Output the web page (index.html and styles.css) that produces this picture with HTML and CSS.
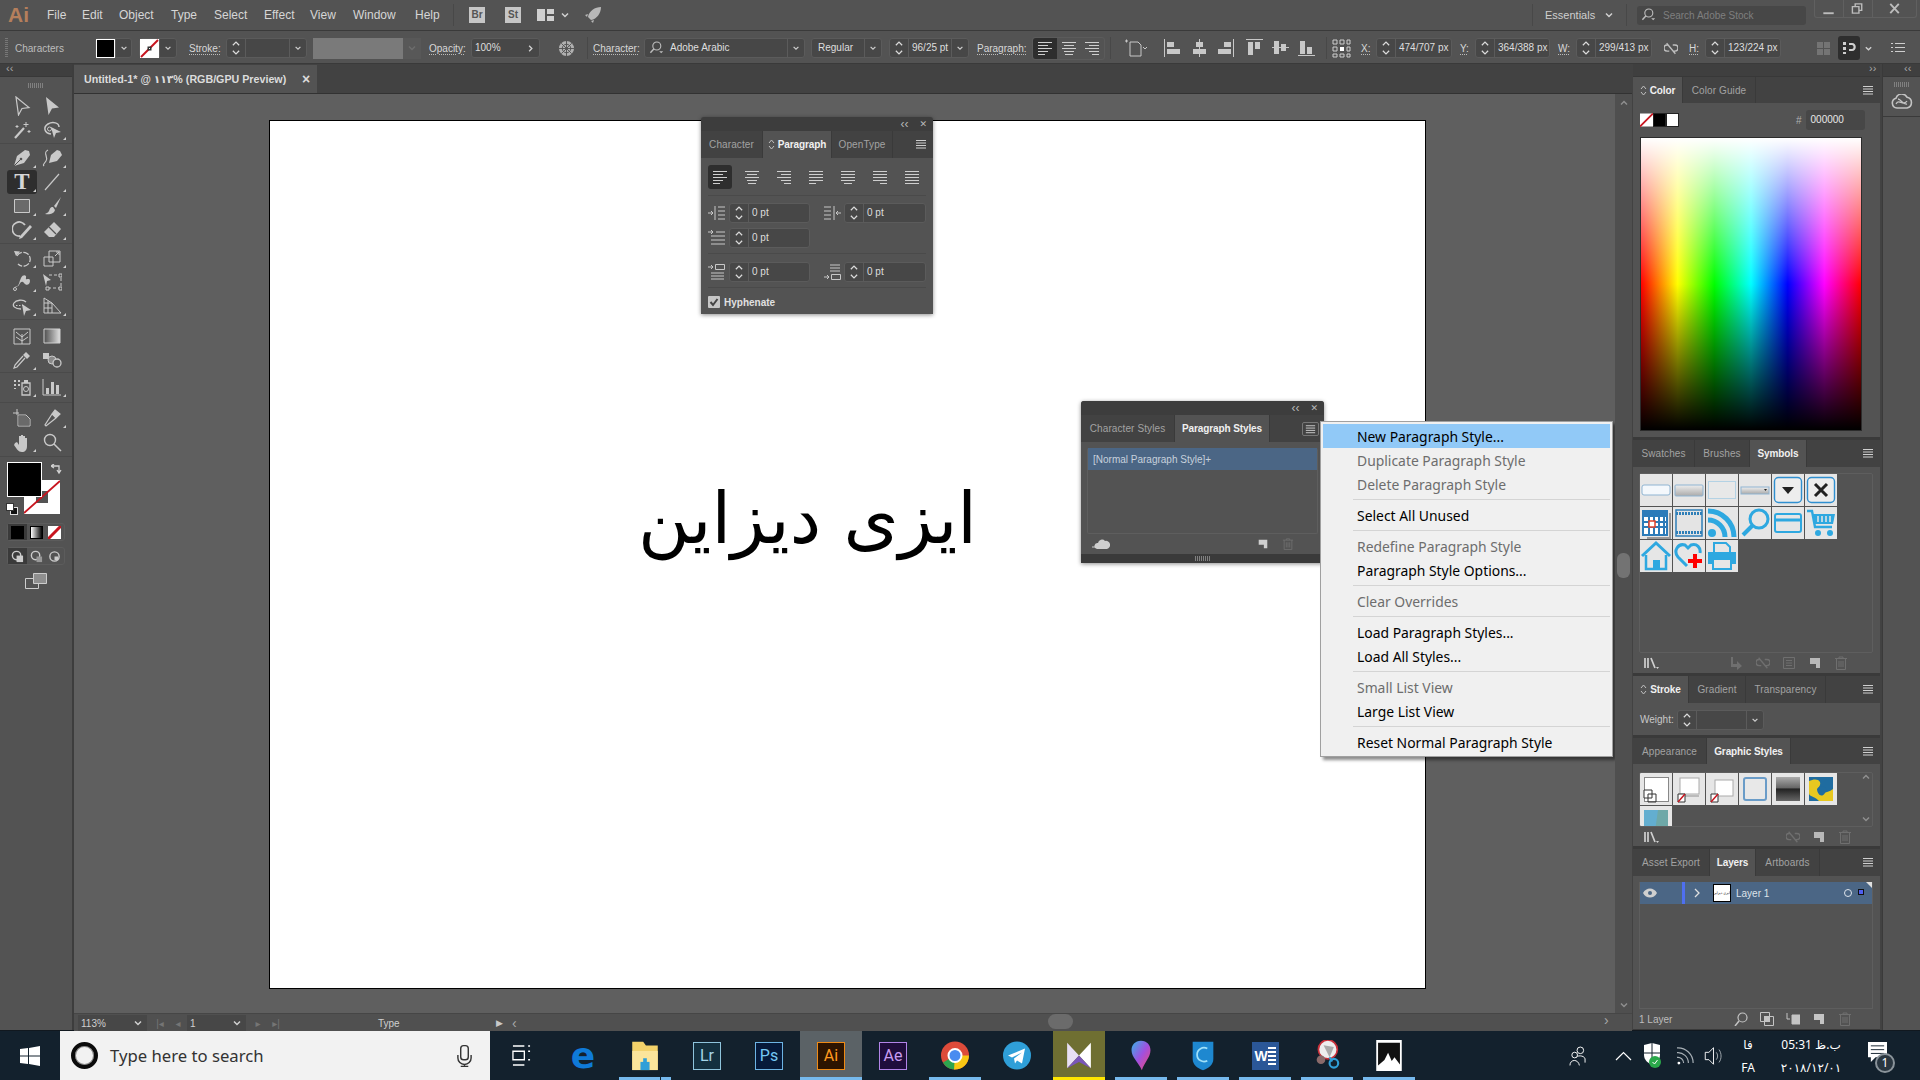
FILE: index.html
```html
<!DOCTYPE html>
<html lang="en">
<head>
  <meta charset="UTF-8" />
  <title>Adobe Illustrator</title>
  <link rel="stylesheet" href="styles.css">
</head>
<body>
  <!-- shared icons -->
  <svg class="defs" aria-hidden="true">
    <symbol id="chev" viewBox="0 0 10 10"><path d="M2 3.500l3 3 3-3" fill="none" stroke="currentColor" stroke-width="1.500"/></symbol>
    <symbol id="spin" viewBox="0 0 12 20"><path d="M2.500 7L6 3.500 9.500 7M2.500 13L6 16.500 9.500 13" fill="none" stroke="currentColor" stroke-width="1.400"/></symbol>
    <symbol id="updn" viewBox="0 0 7 11"><path d="M1 4l2.500-3L6 4M1 7l2.500 3L6 7" fill="none" stroke="currentColor"/></symbol>
    <symbol id="burger" viewBox="0 0 14 12"><path d="M2 2.500h10M2 5h10M2 7.500h10M2 10h10" stroke="currentColor" stroke-width="1"/></symbol>
    <symbol id="search" viewBox="0 0 20 20"><circle cx="11" cy="7.500" r="5" fill="none" stroke="currentColor" stroke-width="1.400"/><path d="M7.500 11L3 16" stroke="currentColor" stroke-width="1.800"/><path d="M14 14h5l-2.500 2.500z" fill="currentColor"/></symbol>
    <symbol id="al" viewBox="0 0 18 16"><path d="M2 2.500h14M2 5.500h10M2 8.500h14M2 11.500h10M2 14.500h7" stroke="currentColor"/></symbol>
    <symbol id="ac" viewBox="0 0 18 16"><path d="M2 2.500h14M4 5.500h10M2 8.500h14M4 11.500h10M5 14.500h8" stroke="currentColor"/></symbol>
    <symbol id="ar" viewBox="0 0 18 16"><path d="M2 2.500h14M6 5.500h10M2 8.500h14M6 11.500h10M9 14.500h7" stroke="currentColor"/></symbol>
    <symbol id="jl" viewBox="0 0 18 16"><path d="M2 2.500h14M2 5.500h14M2 8.500h14M2 11.500h14M2 14.500h7" stroke="currentColor"/></symbol>
    <symbol id="jc" viewBox="0 0 18 16"><path d="M2 2.500h14M2 5.500h14M2 8.500h14M2 11.500h14M5 14.500h8" stroke="currentColor"/></symbol>
    <symbol id="jr" viewBox="0 0 18 16"><path d="M2 2.500h14M2 5.500h14M2 8.500h14M2 11.500h14M9 14.500h7" stroke="currentColor"/></symbol>
    <symbol id="ja" viewBox="0 0 18 16"><path d="M2 2.500h14M2 5.500h14M2 8.500h14M2 11.500h14M2 14.500h14" stroke="currentColor"/></symbol>
    <symbol id="new" viewBox="0 0 14 14"><path d="M2 2h10v10H8V8H2z" fill="currentColor"/></symbol>
    <symbol id="trash" viewBox="0 0 14 14"><path d="M1 2.500h12M5 2.500V1h4v1.500M2.500 2.500v11h9v-11M5 5v6M7 5v6M9 5v6" fill="none" stroke="currentColor"/></symbol>
    <symbol id="unlink" viewBox="0 0 16 14"><path d="M5 3H3.500a3.500 3.500 0 0 0 0 7H6M10 3h2.500a3.500 3.500 0 0 1 0 7H10M3 1l10 12" fill="none" stroke="currentColor" stroke-width="1.500"/></symbol>
    <symbol id="lib" viewBox="0 0 16 14"><path d="M2 2v10M5 2v10M8 2l4 10" fill="none" stroke="currentColor" stroke-width="1.700"/><path d="M13 11h3l-1.500 2z" fill="currentColor"/></symbol>
    <symbol id="place" viewBox="0 0 14 14"><path d="M3 1v7h4V5l5 5-5 4v-3H1V1z" fill="currentColor"/></symbol>
    <symbol id="opts" viewBox="0 0 14 14"><path d="M1.500 1.500h11v11h-11zM4 4.500h6M4 7h6M4 9.500h6" fill="none" stroke="currentColor"/></symbol>
    <symbol id="doc" viewBox="0 0 24 20"><path d="M1 3h3M2.500 1.500v3M6 4h8l3 3v11H6zM19 9l2 2 2-2" fill="none" stroke="currentColor"/></symbol>
  </svg>

  <div class="app">
    <!-- Menu bar -->
    <header class="menubar">
      <span class="ai-logo">Ai</span>
      <nav class="menus">
        <span class="m-file">File</span><span class="m-edit">Edit</span><span class="m-object">Object</span><span class="m-type">Type</span><span class="m-select">Select</span><span class="m-effect">Effect</span><span class="m-view">View</span><span class="m-window">Window</span><span class="m-help">Help</span>
      </nav>
      <i class="vsep ml-1"></i>
      <span class="app-tile ml-15">Br</span>
      <span class="app-tile ml-20">St</span>
      <svg class="arrange-ic ml-16" viewBox="0 0 17 14"><path d="M0 1h8v12H0zM10 1h7v5h-7zM10 8h7v5h-7z" fill="currentColor"/></svg>
      <svg class="chev-ic ml-6"><use href="#chev"/></svg>
      <svg class="rocket-ic ml-14" viewBox="0 0 18 18"><path d="M17 1C11 1 5 5 4 11l3 3c6-1 10-7 10-13zM4 8L1 9l2 2zM10 14l-1 3-2-2z" fill="currentColor"/></svg>
      <div class="top-right">
        <i class="vsep"></i>
        <span class="workspace">Essentials</span>
        <svg class="chev-ic ws-chev"><use href="#chev"/></svg>
        <i class="vsep ml-12"></i>
        <div class="stock-search">
          <svg class="search-ic"><use href="#search"/></svg>
          <span>Search Adobe Stock</span>
        </div>
        <div class="win-btns">
          <svg viewBox="0 0 28 18" class="w-min"><path d="M8 13h11v2H8z" fill="currentColor"/></svg>
          <svg viewBox="0 0 30 18" class="w-res"><path d="M9 7h7v7H9zM12 7V4h7v7h-3" fill="none" stroke="currentColor" stroke-width="1.500"/></svg>
          <svg viewBox="0 0 44 18" class="w-cls"><path d="M17 4l9 10M26 4l-9 10" stroke="currentColor" stroke-width="2"/></svg>
        </div>
      </div>
    </header>

    <!-- Control bar -->
    <div class="controlbar">
      <i class="grip"></i>
      <span class="ctl-title">Characters</span>
      <div class="combo w-37 ml-7"><span class="sw sw-black"></span><svg class="chev-ic"><use href="#chev"/></svg></div>
      <div class="combo w-38 ml-7">
        <svg class="sw" viewBox="0 0 19 19"><path d="M0 0h19v19H0z" fill="#fff"/><path d="M1 18L18 1" stroke="#c8141e" stroke-width="2"/><path d="M7.500 7.500h4v4h-4z" fill="#333"/><path d="M9 9h1v1H9z" fill="#fff"/></svg>
        <svg class="chev-ic"><use href="#chev"/></svg>
      </div>
      <span class="ctl-label w-31 ml-12">Stroke:</span>
      <div class="combo w-81 ml-6"><svg class="spin-ic"><use href="#spin"/></svg><span class="val"></span><svg class="chev-ic"><use href="#chev"/></svg></div>
      <div class="gray-combo ml-6"><span class="gray-fill"></span><svg class="chev-ic"><use href="#chev"/></svg></div>
      <span class="ctl-label w-36 ml-8">Opacity:</span>
      <div class="combo w-69 ml-6"><span class="val">100%</span><svg class="chev-ic chev-right"><use href="#chev"/></svg></div>
      <svg class="globe-ic ml-18" viewBox="0 0 18 18"><circle cx="9" cy="9" r="8" fill="currentColor"/><path d="M9 1v16M1 9h16M3.500 3.500l11 11M14.500 3.500l-11 11" stroke="#535353"/><circle cx="9" cy="9" r="4.500" fill="none" stroke="#535353"/></svg>
      <i class="vsep ml-12"></i>
      <span class="ctl-label w-44 ml-5">Character:</span>
      <div class="combo w-161 ml-7"><svg class="search-ic"><use href="#search"/></svg><span class="val">Adobe Arabic</span><svg class="chev-ic"><use href="#chev"/></svg></div>
      <div class="combo w-71 ml-6"><span class="val pl-7">Regular</span><svg class="chev-ic"><use href="#chev"/></svg></div>
      <div class="combo w-80 ml-7"><svg class="spin-ic"><use href="#spin"/></svg><span class="val">96/25 pt</span><svg class="chev-ic"><use href="#chev"/></svg></div>
      <span class="ctl-label w-48 ml-8">Paragraph:</span>
      <div class="align-group ml-7">
        <span class="on"><svg><use href="#al"/></svg></span>
        <span><svg><use href="#ac"/></svg></span>
        <span><svg><use href="#ar"/></svg></span>
      </div>
      <i class="vsep ml-5"></i>
      <svg class="doc-ic ml-13"><use href="#doc"/></svg>
      <svg class="obj-ic ml-16" viewBox="0 0 17 18"><path d="M0 0h1v18H0zM3 3h7v5H3zM3 10h13v5H3z" fill="currentColor"/></svg>
      <svg class="obj-ic ml-10" viewBox="0 0 17 18"><path d="M8 0h1v18H8zM5 3h7v5H5zM2 10h13v5H2z" fill="currentColor"/></svg>
      <svg class="obj-ic ml-9" viewBox="0 0 17 18"><path d="M16 0h1v18h-1zM7 3h7v5H7zM1 10h13v5H1z" fill="currentColor"/></svg>
      <svg class="obj-ic ml-12" viewBox="0 0 17 18"><path d="M0 0h17v1H0zM2 3h5v13H2zM9 3h5v7H9z" fill="currentColor"/></svg>
      <svg class="obj-ic ml-9" viewBox="0 0 17 18"><path d="M0 8h17v1H0zM2 2h5v13H2zM9 5h5v7H9z" fill="currentColor"/></svg>
      <svg class="obj-ic ml-9" viewBox="0 0 17 18"><path d="M0 16h17v1H0zM2 2h5v13H2zM9 8h5v7H9z" fill="currentColor"/></svg>
      <i class="vsep ml-11"></i>
      <svg class="ref-ic ml-5" viewBox="0 0 19 19"><path d="M1 1h4v4H1zM8 1h4v4H8zM15 1h3v4h-3zM1 8h4v4H1zM15 8h3v4h-3zM1 15h4v3H1zM8 15h4v3H8zM15 15h3v3h-3z" fill="none" stroke="currentColor"/><path d="M8 8h4v4H8z" fill="#fff"/></svg>
      <span class="ctl-label w-15 ml-10">X:</span>
      <div class="combo w-76"><svg class="spin-ic"><use href="#spin"/></svg><span class="val">474/707 px</span></div>
      <span class="ctl-label w-15 ml-8">Y:</span>
      <div class="combo w-75"><svg class="spin-ic"><use href="#spin"/></svg><span class="val">364/388 px</span></div>
      <span class="ctl-label w-18 ml-8">W:</span>
      <div class="combo w-76"><svg class="spin-ic"><use href="#spin"/></svg><span class="val">299/413 px</span></div>
      <svg class="link-ic ml-12"><use href="#unlink"/></svg>
      <span class="ctl-label w-16 ml-11">H:</span>
      <div class="combo w-76"><svg class="spin-ic"><use href="#spin"/></svg><span class="val">123/224 px</span></div>
      <svg class="grid4-ic ml-36" viewBox="0 0 13 13"><path d="M0 0h6v6H0zM7 0h6v6H7zM0 7h6v6H0zM7 7h6v6H7z" fill="#747474"/></svg>
      <span class="type-btn ml-8"><svg viewBox="0 0 16 16"><path d="M2 2h3v3H2zM2 7h3v3H2zM2 12h3v2H2zM8 3h3c5 0 5 8 0 8H8v-2h3c2 0 2-4 0-4H8z" fill="currentColor"/></svg></span>
      <svg class="chev-ic ml-4 chev-9"><use href="#chev"/></svg>
      <svg class="list-ic ml-18" viewBox="0 0 14 12"><path d="M0 1h2v1H0zM4 1h10v1H4zM0 5h2v1H0zM4 5h10v1H4zM0 9h2v1H0zM4 9h10v1H4z" fill="currentColor"/></svg>
    </div>

    <!-- Workspace -->
    <main class="workspace-row">
      <aside class="toolbar">
        <div class="strip"><span class="arrows">‹‹</span></div>
        <div class="tool-grip"><i class="grip-h"></i></div>

        <div class="tool-group tg-select">
          <span class="tool"><svg viewBox="0 0 20 20"><path d="M4 1l13 10.500-7 1-3.500 6.500z" fill="none" stroke="currentColor" stroke-width="1.200"/></svg></span>
          <span class="tool"><svg viewBox="0 0 20 20"><path d="M4 1l13 10.500-7 1-3.500 6.500z" fill="currentColor"/></svg></span>
          <span class="tool"><svg viewBox="0 0 20 20"><path d="M3 18L12 8" stroke="currentColor" stroke-width="2.200"/><path d="M14 2v5M11.500 4.500h5M5 5v3M3.500 6.500h3M17 10v3M15.500 11.500h3" stroke="currentColor"/></svg></span>
          <span class="tool more"><svg viewBox="0 0 20 20"><path d="M9 14C2 13 1 7 6 4s11-1 11 3" fill="none" stroke="currentColor" stroke-width="1.500"/><path d="M9 7l10 5-5 1-2 5z" fill="currentColor"/><circle cx="7.500" cy="9" r="2" fill="none" stroke="currentColor"/></svg></span>
        </div>
        <div class="tool-group tg-draw">
          <span class="tool more"><svg viewBox="0 0 20 20"><path d="M17 3l-4-1-8 6-3 10 10-3 6-8z" fill="currentColor"/><path d="M2 18l6-6" stroke="#535353"/><circle cx="9" cy="11" r="1.300" fill="#535353"/></svg></span>
          <span class="tool more"><svg viewBox="0 0 20 20"><path d="M18 3l-3-1-6 5-2 8 8-2 5-6z" fill="currentColor"/><path d="M6 2C0 5 7 9 4 13s-3 4-2 5" fill="none" stroke="currentColor" stroke-width="1.200"/></svg></span>
          <span class="tool tool-on more"><span class="t-glyph">T</span></span>
          <span class="tool more"><svg viewBox="0 0 20 20"><path d="M3 18L17 2" stroke="currentColor" stroke-width="1.200"/></svg></span>
          <span class="tool more"><svg viewBox="0 0 20 20"><path d="M2.500 3.500h15v13h-15z" fill="#6a6a6a" stroke="currentColor"/></svg></span>
          <span class="tool more"><svg viewBox="0 0 20 20"><path d="M19 1l-7 9 2 2z" fill="currentColor"/><path d="M11 11c-3 0-3 2-4 4s-3 2-4 3c4 1 9 0 10-4z" fill="currentColor"/></svg></span>
          <span class="tool more"><svg viewBox="0 0 20 20"><path d="M13 5A7 7 0 1 0 8 16" fill="none" stroke="currentColor" stroke-width="1.800"/><path d="M8 16L18 5l2 2L10 18l-3 1z" fill="currentColor"/></svg></span>
          <span class="tool more"><svg viewBox="0 0 20 20"><path d="M12 2l7 7-7 8H7l-5-5z" fill="currentColor"/><path d="M7 7l7 7" stroke="#535353" stroke-width="1.200"/></svg></span>
        </div>
        <div class="tool-group tg-transform">
          <span class="tool more"><svg viewBox="0 0 20 20"><path d="M5 8a7 7 0 1 1 1 8" fill="none" stroke="currentColor" stroke-width="1.300" stroke-dasharray="6 1.500"/><path d="M2 3l6 .5L4 8z" fill="currentColor"/></svg></span>
          <span class="tool more"><svg viewBox="0 0 20 20"><path d="M2 9h9v9H2zM7 3h11v11H7z" fill="none" stroke="currentColor"/><path d="M13 8l4-4M14 4h3v3" fill="none" stroke="currentColor"/></svg></span>
          <span class="tool more"><svg viewBox="0 0 20 20"><path d="M4 14c3 1 3-4 5-8s6-3 5 0 4-1 4 3-4 5-6 2-4 0-5 2-4 2-3 1z" fill="currentColor"/><circle cx="3" cy="17" r="1.500" fill="none" stroke="currentColor"/></svg></span>
          <span class="tool"><svg viewBox="0 0 20 20"><path d="M1 2l8 6-4 1-1 5z" fill="currentColor"/><path d="M7 3h12v13H5" fill="none" stroke="currentColor" stroke-dasharray="3 2"/><path d="M17 2h3v3h-3zM17 15h3v3h-3zM4 15h3v3H4z" fill="#535353" stroke="currentColor"/></svg></span>
          <span class="tool more"><svg viewBox="0 0 20 20"><path d="M9 13C3 13 0 10 2 7s9-4 12-1" fill="none" stroke="currentColor" stroke-width="1.300"/><path d="M10 8l9 6-5 1-2 5z" fill="currentColor"/><path d="M4 9.500h7" stroke="currentColor" stroke-dasharray="1.500 1.500"/></svg></span>
          <span class="tool more"><svg viewBox="0 0 20 20"><path d="M2 2l8 5v10H2zM10 7l9 10h-9M2 7h8M2 12h8M6 4.500V17" fill="none" stroke="currentColor"/></svg></span>
        </div>
        <div class="tool-group tg-paint">
          <span class="tool"><svg viewBox="0 0 20 20"><path d="M2 3h16v15H2zM10 18V8M10 11L4 6M10 11l6-5M10 15l-6-4M10 15l6-4" fill="none" stroke="currentColor"/></svg></span>
          <span class="tool"><svg viewBox="0 0 20 20"><defs><linearGradient id="gt"><stop offset="0" stop-color="#4e4e4e"/><stop offset="1" stop-color="#e0e0e0"/></linearGradient></defs><path d="M2 3h16v14H2z" fill="url(#gt)" stroke="#cfcfcf"/></svg></span>
          <span class="tool more"><svg viewBox="0 0 20 20"><path d="M14 2l4 4-3 3-4-4z" fill="currentColor"/><path d="M11 6L3 15l-1 3 3-1 8-9" fill="none" stroke="currentColor" stroke-width="1.200"/></svg></span>
          <span class="tool"><svg viewBox="0 0 20 20"><path d="M1 3h6v6H1z" fill="currentColor"/><circle cx="10" cy="10" r="4" fill="#8a8a8a" stroke="currentColor"/><circle cx="15" cy="13" r="4" fill="#535353" stroke="currentColor" stroke-width="1.300"/></svg></span>
        </div>
        <div class="tool-group tg-chart">
          <span class="tool more"><svg viewBox="0 0 20 20"><path d="M10 6h8v12h-8z" fill="none" stroke="currentColor" stroke-width="1.300"/><path d="M12 3h4v3h-4z" fill="currentColor"/><circle cx="14" cy="12" r="2.500" fill="none" stroke="currentColor"/><path d="M2 3h2v2H2zM6 3h2v2H6zM2 7h2v2H2zM6 7h2v2H6zM2 11h2v1H2z" fill="currentColor"/></svg></span>
          <span class="tool more"><svg viewBox="0 0 20 20"><path d="M1 2v16h18" fill="none" stroke="currentColor"/><path d="M4 11h3v6H4zM9 5h3v12H9zM14 8h3v9h-3z" fill="currentColor"/></svg></span>
        </div>
        <div class="tool-group tg-nav">
          <span class="tool"><svg viewBox="0 0 20 20"><path d="M1 5h6M5 1v6M6 7h8l4 4v7H6z" fill="none" stroke="currentColor"/><path d="M6.500 7.500h7l4 4v6h-11z" fill="#6a6a6a"/></svg></span>
          <span class="tool more"><svg viewBox="0 0 20 20"><path d="M13 2l5 4-4 4-4-4zM10 6l-7 11 1 1 10-8" fill="none" stroke="currentColor" stroke-width="1.200"/><path d="M13 2l5 4-4 4-4-4z" fill="currentColor"/></svg></span>
          <span class="tool more"><svg viewBox="0 0 20 20"><path d="M3 11l2-1 2 3V4h2v5-6h2v6-5h2v5-3h2v8c0 4-2 6-5 6-4 0-5-3-8-7z" fill="currentColor"/></svg></span>
          <span class="tool"><svg viewBox="0 0 20 20"><circle cx="8" cy="8" r="5.500" fill="none" stroke="currentColor" stroke-width="1.400"/><path d="M12 12l7 7" stroke="currentColor" stroke-width="1.500"/></svg></span>
        </div>

        <div class="fill-stroke">
          <span class="tb-fill"></span>
          <svg class="tb-stroke" viewBox="0 0 36 34"><path d="M0 0h36v34H0zM12 11v12h12V11z" fill="#fff" fill-rule="evenodd"/><path d="M0 33L36 1" stroke="#c8141e" stroke-width="1.800"/></svg>
          <svg class="tb-swap" viewBox="0 0 12 11"><path d="M1 2h7l0 6M6 6l2 3 2-3M3 0L0 2l3 2" fill="none" stroke="#d2d2d2" stroke-width="1.300"/></svg>
          <span class="tb-default"><i></i><b></b></span>
        </div>
        <div class="mode-row">
          <span class="on"><i class="m-black"></i></span>
          <span><i class="m-grad"></i></span>
          <span><svg viewBox="0 0 13 13"><path d="M0 0h13v13H0z" fill="#fff"/><path d="M0 13L13 0" stroke="#c8141e" stroke-width="3"/></svg></span>
        </div>
        <div class="mode-row draw-row">
          <span class="on"><svg viewBox="0 0 14 14"><circle cx="6" cy="6" r="4.500" fill="none" stroke="#ccc" stroke-width="1.500"/><path d="M6 6h7v7H6z" fill="#ccc"/></svg></span>
          <span><svg viewBox="0 0 14 14"><circle cx="6" cy="6" r="4.500" fill="none" stroke="#ccc" stroke-width="1.500"/><path d="M7 7h6v6H7z" fill="#999"/></svg></span>
          <span><svg viewBox="0 0 14 14"><circle cx="7" cy="7" r="5" fill="none" stroke="#ccc" stroke-width="1.500"/><path d="M7 7h4v4H7z" fill="#ccc"/></svg></span>
        </div>
        <svg class="screen-ic" viewBox="0 0 22 16"><path d="M.5 5.500h13v10H.5z" fill="none" stroke="#cdcdcd"/><path d="M8.500.5h13v10h-13z" fill="#8f8f8f" stroke="#cdcdcd"/></svg>
      </aside>

      <section class="center">
        <div class="doc-tabs">
          <div class="doc-tab"><span>Untitled-1* @ ۱۱۳% (RGB/GPU Preview)</span><b>×</b></div>
        </div>
        <div class="canvas-row">
          <div class="canvas">
            <div class="artboard"><p class="art-text" lang="fa" dir="rtl">ایزی دیزاین</p></div>

            <!-- Floating Paragraph panel -->
            <div class="float para-panel">
              <div class="float-title"><span>‹‹</span><b>✕</b></div>
              <div class="tabs">
                <span class="tab t62">Character</span>
                <span class="tab t69 active"><svg class="updn"><use href="#updn"/></svg>Paragraph</span>
                <span class="tab t61">OpenType</span>
                <svg class="burger-ic"><use href="#burger"/></svg>
              </div>
              <div class="para-align">
                <span class="on"><svg><use href="#al"/></svg></span>
                <span><svg><use href="#ac"/></svg></span>
                <span><svg><use href="#ar"/></svg></span>
                <span><svg><use href="#jl"/></svg></span>
                <span><svg><use href="#jc"/></svg></span>
                <span><svg><use href="#jr"/></svg></span>
                <span><svg><use href="#ja"/></svg></span>
              </div>
              <div class="para-fields">
                <div class="pf">
                  <svg class="pf-ic" viewBox="0 0 18 18"><path d="M0 9h5M3 7l2 2-2 2M7 2v14M10 3h7M10 7h7M10 11h7M10 15h7" fill="none" stroke="#c8c8c8"/></svg>
                  <div class="combo pf-box"><svg class="spin-ic"><use href="#spin"/></svg><span class="val">0 pt</span></div>
                </div>
                <div class="pf pf-right">
                  <svg class="pf-ic" viewBox="0 0 18 18"><path d="M0 3h7M0 7h7M0 11h7M0 15h7M10 2v14M17 9h-5M14 7l-2 2 2 2" fill="none" stroke="#c8c8c8"/></svg>
                  <div class="combo pf-box"><svg class="spin-ic"><use href="#spin"/></svg><span class="val">0 pt</span></div>
                </div>
                <div class="pf pf-full">
                  <svg class="pf-ic" viewBox="0 0 18 18"><path d="M0 3h5M3 1l2 2-2 2M8 3h9M3 7h14M3 11h14M3 15h14" fill="none" stroke="#c8c8c8"/></svg>
                  <div class="combo pf-box"><svg class="spin-ic"><use href="#spin"/></svg><span class="val">0 pt</span></div>
                </div>
              </div>
              <div class="para-fields para-fields-2">
                <div class="pf">
                  <svg class="pf-ic" viewBox="0 0 18 18"><path d="M0 4h5M3 2l2 2-2 2M7.500 1.500h9v5h-9zM3 10h13M3 13h13M3 16h13" fill="none" stroke="#c8c8c8"/></svg>
                  <div class="combo pf-box"><svg class="spin-ic"><use href="#spin"/></svg><span class="val">0 pt</span></div>
                </div>
                <div class="pf pf-right">
                  <svg class="pf-ic" viewBox="0 0 18 18"><path d="M6 2h10M6 5h10M6 8h10M0 14h5M3 12l2 2-2 2M7.500 11.500h9v5h-9z" fill="none" stroke="#c8c8c8"/></svg>
                  <div class="combo pf-box"><svg class="spin-ic"><use href="#spin"/></svg><span class="val">0 pt</span></div>
                </div>
              </div>
              <div class="hyph">
                <svg viewBox="0 0 12 12"><path d="M0 1a1 1 0 0 1 1-1h10a1 1 0 0 1 1 1v10a1 1 0 0 1-1 1H1a1 1 0 0 1-1-1z" fill="#c6c6c6"/><path d="M2.500 6l2.500 3 4.500-6" fill="none" stroke="#444" stroke-width="2"/></svg>
                <span>Hyphenate</span>
              </div>
            </div>

            <!-- Floating Paragraph Styles panel -->
            <div class="float pstyles-panel">
              <div class="float-title"><span>‹‹</span><b>✕</b></div>
              <div class="tabs">
                <span class="tab t94">Character Styles</span>
                <span class="tab t95 active">Paragraph Styles</span>
                <span class="burger-btn"><svg class="burger-ic"><use href="#burger"/></svg></span>
              </div>
              <div class="pstyles-body">
                <div class="pstyles-list"><div class="row-sel">[Normal Paragraph Style]+</div></div>
                <div class="pstyles-foot">
                  <svg class="cloud-ic" viewBox="0 0 18 12"><path d="M5 11a3 3 0 0 1 1-6 4 4 0 0 1 7-2 4 4 0 0 1 2 8z" fill="currentColor"/><path d="M0 9h4" stroke="currentColor"/></svg>
                  <svg class="new-ic"><use href="#new"/></svg>
                  <svg class="trash-ic dim"><use href="#trash"/></svg>
                </div>
              </div>
              <div class="float-foot"><i class="grip-h"></i></div>
            </div>

            <!-- Panel flyout -->
            <div class="flyout">
              <div class="fly-item hover">New Paragraph Style...</div>
              <div class="fly-item off">Duplicate Paragraph Style</div>
              <div class="fly-item off">Delete Paragraph Style</div>
              <hr>
              <div class="fly-item">Select All Unused</div>
              <hr>
              <div class="fly-item off">Redefine Paragraph Style</div>
              <div class="fly-item">Paragraph Style Options...</div>
              <hr>
              <div class="fly-item off">Clear Overrides</div>
              <hr>
              <div class="fly-item">Load Paragraph Styles...</div>
              <div class="fly-item">Load All Styles...</div>
              <hr>
              <div class="fly-item off">Small List View</div>
              <div class="fly-item">Large List View</div>
              <hr>
              <div class="fly-item">Reset Normal Paragraph Style</div>
            </div>
          </div>
          <div class="vscroll">
            <svg class="chev-ic flip"><use href="#chev"/></svg>
            <i class="vthumb"></i>
            <svg class="chev-ic"><use href="#chev"/></svg>
          </div>
        </div>
        <div class="statusbar">
          <div class="st-box st-zoom"><span>113%</span><svg class="chev-ic"><use href="#chev"/></svg></div>
          <span class="st-nav nav-first">|◂</span><span class="st-nav">◂</span>
          <div class="st-box st-page"><span>1</span><svg class="chev-ic"><use href="#chev"/></svg></div>
          <span class="st-nav nav-next">▸</span><span class="st-nav">▸|</span>
          <span class="st-type">Type</span>
          <span class="st-play">▶</span>
          <span class="st-left">‹</span>
          <i class="hthumb"></i>
          <span class="st-right">›</span>
        </div>
      </section>

      <aside class="right">
        <div class="panels">
          <div class="strip strip-right"><span class="arrows">››</span></div>

          <section class="panel p-color">
            <div class="tabs">
              <span class="tab t50 active"><svg class="updn"><use href="#updn"/></svg>Color</span>
              <span class="tab t73">Color Guide</span>
              <svg class="burger-ic"><use href="#burger"/></svg>
            </div>
            <div class="color-body">
              <div class="color-top">
                <svg class="c-none" viewBox="0 0 13 13"><path d="M0 0h13v13H0z" fill="#fff"/><path d="M0 13L13 0" stroke="#c8141e" stroke-width="1.800"/></svg>
                <i class="c-black"></i><i class="c-white"></i>
                <span class="hash">#</span>
                <span class="hex">000000</span>
              </div>
              <div class="spectrum"></div>
            </div>
          </section>

          <section class="panel p-symbols">
            <div class="tabs">
              <span class="tab t62">Swatches</span>
              <span class="tab t55">Brushes</span>
              <span class="tab t57 active">Symbols</span>
              <svg class="burger-ic"><use href="#burger"/></svg>
            </div>
            <div class="thumb-body">
              <div class="thumbs sym-thumbs">
                <svg class="thumb" viewBox="0 0 32 32"><rect x="2" y="11" width="28" height="10" rx="2" fill="#f4f8fc" stroke="#8fb4d2"/></svg>
                <svg class="thumb" viewBox="0 0 32 32"><defs><linearGradient id="g1" x2="0" y2="1"><stop offset="0" stop-color="#eee"/><stop offset="1" stop-color="#aaa"/></linearGradient></defs><rect x="2" y="11" width="28" height="11" rx="1" fill="url(#g1)" stroke="#8fb4d2"/></svg>
                <svg class="thumb" viewBox="0 0 32 32"><rect x="2.500" y="7.500" width="27" height="17" fill="#e8e8e8" stroke="#b4d2e4"/></svg>
                <svg class="thumb" viewBox="0 0 32 32"><rect x="2" y="13" width="28" height="7" fill="url(#g1)" stroke="#8fb4d2"/><path d="M25 15h3l-1.500 2z" fill="#222"/></svg>
                <svg class="thumb" viewBox="0 0 32 32"><rect x="2.500" y="3.500" width="27" height="25" rx="4" fill="#ededed" stroke="#2f8fd0" stroke-width="1.400"/><path d="M10 13h12l-6 7z" fill="#222"/></svg>
                <svg class="thumb" viewBox="0 0 32 32"><rect x="2.500" y="3.500" width="27" height="25" rx="4" fill="#ededed" stroke="#2f8fd0" stroke-width="1.400"/><path d="M10 10l12 12M22 10L10 22" stroke="#222" stroke-width="3"/></svg>
                <svg class="thumb" viewBox="0 0 32 32"><path d="M2 3h26v26H2z" fill="#2b7bb9"/><path d="M30 6v25H7" fill="none" stroke="#999" stroke-width="2"/><path d="M4 10h22v17H4z" fill="#fff"/><path d="M9 10v17M14 10v17M19 10v17M24 10v17M4 15h22M4 20h22" stroke="#2b7bb9" stroke-width="2"/><rect x="9" y="14" width="6" height="6" fill="#fff" stroke="#e0402a" stroke-width="1.500"/></svg>
                <svg class="thumb" viewBox="0 0 32 32"><path d="M3 3h26v26H3z" fill="#e4e4e4" stroke="#2f7fb8" stroke-width="1.500"/><path d="M3 6.500h26M3 25.500h26" stroke="#2f7fb8" stroke-width="3" stroke-dasharray="2 1"/></svg>
                <svg class="thumb" viewBox="0 0 32 32"><circle cx="6" cy="26" r="4" fill="#2ea8e0"/><path d="M2 13a17 17 0 0 1 17 17M2 4a26 26 0 0 1 26 26" fill="none" stroke="#2ea8e0" stroke-width="5"/></svg>
                <svg class="thumb" viewBox="0 0 32 32"><circle cx="20" cy="12" r="9" fill="none" stroke="#2ea8e0" stroke-width="3"/><path d="M13 19L4 28" stroke="#2ea8e0" stroke-width="4"/></svg>
                <svg class="thumb" viewBox="0 0 32 32"><rect x="3" y="7" width="26" height="18" rx="2" fill="none" stroke="#2ea8e0" stroke-width="2"/><path d="M3 13h26" stroke="#2ea8e0" stroke-width="3"/></svg>
                <svg class="thumb" viewBox="0 0 32 32"><path d="M2 4h5l3 16h17" fill="none" stroke="#2ea8e0" stroke-width="2.400"/><path d="M8 7h22l-2 10H10z" fill="#2ea8e0"/><path d="M13 9v6M17 9v6M21 9v6M25 9v6" stroke="#e6e6e6" stroke-width="1.500"/><circle cx="13" cy="26" r="3" fill="#2ea8e0"/><circle cx="25" cy="26" r="3" fill="#2ea8e0"/></svg>
                <svg class="thumb" viewBox="0 0 32 32"><path d="M2 16L16 3l14 13" fill="none" stroke="#2ea8e0" stroke-width="3"/><path d="M6 15v14h20V15" fill="none" stroke="#2ea8e0" stroke-width="2.500"/><path d="M13 20h7v9h-7z" fill="#2ea8e0"/></svg>
                <svg class="thumb" viewBox="0 0 32 32"><path d="M14 26L5 17C0 11 5 3 12 5l3 3 3-3c6-2 10 3 9 8" fill="none" stroke="#2ea8e0" stroke-width="3"/><path d="M20 14h4v5h5v4h-5v5h-4v-5h-5v-4h5z" fill="#f00"/></svg>
                <svg class="thumb" viewBox="0 0 32 32"><path d="M8 12V3h12l4 4v5" fill="none" stroke="#2ea8e0" stroke-width="2"/><path d="M2 12h28v12H2z" fill="#2ea8e0"/><path d="M7 19h18v10H7z" fill="#e6e6e6" stroke="#2ea8e0" stroke-width="2"/></svg>
              </div>
              <div class="thumb-foot">
                <svg class="lib-ic"><use href="#lib"/></svg>
                <span class="foot-icons">
                  <svg class="dim"><use href="#place"/></svg>
                  <svg class="dim"><use href="#unlink"/></svg>
                  <svg class="dim"><use href="#opts"/></svg>
                  <svg class="mid"><use href="#new"/></svg>
                  <svg class="dim"><use href="#trash"/></svg>
                </span>
              </div>
            </div>
          </section>

          <section class="panel p-stroke">
            <div class="tabs">
              <span class="tab t56 active"><svg class="updn"><use href="#updn"/></svg>Stroke</span>
              <span class="tab t57">Gradient</span>
              <span class="tab t80">Transparency</span>
              <svg class="burger-ic"><use href="#burger"/></svg>
            </div>
            <div class="weight-row">
              <span>Weight:</span>
              <div class="combo"><svg class="spin-ic"><use href="#spin"/></svg><span class="val"></span><svg class="chev-ic"><use href="#chev"/></svg></div>
            </div>
          </section>

          <section class="panel p-gstyles">
            <div class="tabs">
              <span class="tab t74">Appearance</span>
              <span class="tab t84 active">Graphic Styles</span>
              <svg class="burger-ic"><use href="#burger"/></svg>
            </div>
            <div class="thumb-body">
              <div class="thumbs gs-thumbs">
                <svg class="thumb" viewBox="0 0 32 32"><rect x="4.500" y="4.500" width="24" height="24" fill="#fff" stroke="#888"/><path d="M4 17h8v8H4z" fill="#fff" stroke="#333"/><path d="M8 21h8v8H8z" fill="none" stroke="#333"/></svg>
                <svg class="thumb" viewBox="0 0 32 32"><rect x="7" y="5" width="19" height="16" fill="#fff" stroke="#aaa"/><path d="M9 23h17" stroke="#bbb" stroke-width="2"/><path d="M5 21h7v8H5z" fill="#fff" stroke="#333"/><path d="M5 29l7-8" stroke="#c8141e" stroke-width="1.500"/></svg>
                <svg class="thumb" viewBox="0 0 32 32"><rect x="9" y="7" width="18" height="16" fill="#fff" stroke="#aaa"/><path d="M5 21h7v8H5z" fill="#fff" stroke="#333"/><path d="M5 29l7-8" stroke="#c8141e" stroke-width="1.500"/></svg>
                <svg class="thumb" viewBox="0 0 32 32"><rect x="5" y="5" width="22" height="22" rx="2" fill="#e8e8e8" stroke="#6a9cc8" stroke-width="2"/></svg>
                <svg class="thumb" viewBox="0 0 32 32"><defs><linearGradient id="g2" x2="0" y2="1"><stop offset="0" stop-color="#aaa"/><stop offset=".45" stop-color="#666"/><stop offset=".5" stop-color="#222"/><stop offset="1" stop-color="#666"/></linearGradient></defs><rect x="4" y="4" width="24" height="24" fill="url(#g2)"/></svg>
                <svg class="thumb" viewBox="0 0 32 32"><rect x="4" y="4" width="24" height="24" fill="#1f6ca0"/><path d="M4 8c8-4 14 0 10 6s6 8 14 2v12H14c-6-6-10-4-10-8z" fill="#e8c820"/><path d="M12 16c4-6 12-2 8 4s-8 0-8-4z" fill="#1f6ca0"/></svg>
                <svg class="thumb" viewBox="0 0 32 32"><path d="M4 4h24v28H4z" fill="#63aed0"/><path d="M18 4h10v28H14z" fill="#6ea8a8"/></svg>
              </div>
              <svg class="mini-up chev-ic flip"><use href="#chev"/></svg>
              <svg class="mini-down chev-ic"><use href="#chev"/></svg>
              <div class="thumb-foot">
                <svg class="lib-ic"><use href="#lib"/></svg>
                <span class="foot-icons">
                  <svg class="dim"><use href="#unlink"/></svg>
                  <svg class="mid"><use href="#new"/></svg>
                  <svg class="dim"><use href="#trash"/></svg>
                </span>
              </div>
            </div>
          </section>

          <section class="panel p-layers">
            <div class="tabs">
              <span class="tab t77">Asset Export</span>
              <span class="tab t46 active">Layers</span>
              <span class="tab t64">Artboards</span>
              <svg class="burger-ic"><use href="#burger"/></svg>
            </div>
            <div class="layers-body">
              <div class="layers-list">
                <div class="layer-row">
                  <svg class="eye" viewBox="0 0 14 10"><path d="M0 5c3-6 11-6 14 0-3 6-11 6-14 0z" fill="#cfcfcf"/><circle cx="7" cy="5" r="2" fill="#4b6685"/></svg>
                  <i class="layer-color"></i>
                  <svg class="layer-arrow" viewBox="0 0 6 10"><path d="M1 1l4 4-4 4" fill="none" stroke="#e0e0e0" stroke-width="1.300"/></svg>
                  <span class="layer-thumb" lang="fa" dir="rtl">ایزی دیزاین</span>
                  <span class="layer-name">Layer 1</span>
                  <i class="layer-circle"></i>
                  <i class="layer-square"></i>
                  <i class="layer-corner"></i>
                </div>
              </div>
              <div class="layers-foot">
                <span>1 Layer</span>
                <span class="foot-icons layer-icons">
                  <svg viewBox="0 0 14 14" class="lit"><circle cx="8.500" cy="5.500" r="4.500" fill="none" stroke="currentColor" stroke-width="1.200"/><path d="M5 9l-4 5" stroke="currentColor" stroke-width="1.500"/></svg>
                  <svg viewBox="0 0 14 14" class="lit"><path d="M.5.500h9v9h-9z" fill="none" stroke="currentColor"/><path d="M4 4h6v6H4z" fill="currentColor"/><path d="M10 4.500h3.500v9h-9V10" fill="none" stroke="currentColor"/></svg>
                  <svg viewBox="0 0 14 14" class="lit"><path d="M1 1v6h3M6 3h8v9H6z" fill="none" stroke="currentColor"/><path d="M6 3h8v9H6z" fill="currentColor"/></svg>
                  <svg class="lit"><use href="#new"/></svg>
                  <svg class="dim"><use href="#trash"/></svg>
                </span>
              </div>
            </div>
          </section>
        </div>

        <div class="dock">
          <div class="strip"><span class="arrows arrows-r">‹‹</span></div>
          <div class="dock-cell">
            <i class="grip-h"></i>
            <svg class="cc-ic" viewBox="0 0 22 15"><path d="M6 14a5 5 0 0 1-1-9.800 6 6 0 0 1 11-1 5.500 5.500 0 0 1 0 10.800z" fill="none" stroke="#c4c4c4" stroke-width="1.600"/><path d="M5 10c3-6 7 3 11-3M7 5c3 0 5 6 9 5" fill="none" stroke="#c4c4c4" stroke-width="1.300"/></svg>
          </div>
        </div>
      </aside>
    </main>

    <!-- Windows taskbar -->
    <footer class="taskbar">
      <span class="start"><svg viewBox="0 0 20 20"><path d="M0 3l8-1v7.500H0zM9 2l11-2v9.500H9zM0 10.500h8V18l-8-1zM9 10.500h11V20L9 18z" fill="#fff"/></svg></span>
      <div class="tb-search">
        <i class="cortana"></i>
        <span>Type here to search</span>
        <svg class="mic" viewBox="0 0 18 24"><rect x="5" y="1" width="8" height="15" rx="3" fill="none" stroke="#333" stroke-width="1.500"/><path d="M2 11v3a7 7 0 0 0 14 0v-3M9 21v2M5 23h8" fill="none" stroke="#333" stroke-width="1.500"/></svg>
      </div>
      <span class="tb-app"><svg class="i-task" viewBox="0 0 20 24"><path d="M1 2h12M1 22h12M1 7.500h12v9H1zM17 2h2M17 7.500h2M17 16.500h2" stroke="#fff" fill="none" stroke-width="1.400"/></svg></span>
      <span class="tb-app"><span class="edge-e">e</span></span>
      <span class="tb-app running split"><svg class="i-app" viewBox="0 0 30 34"><path d="M1 2h12l3 4h13v27H1z" fill="#f3d26a"/><path d="M1 12h28v21H1z" fill="#fbe59b"/><path d="M10 24h10v9H10z" fill="#2f9fd8"/><path d="M13 20h4v5h-4z" fill="#2f9fd8"/></svg></span>
      <span class="tb-app"><span class="cc-tile lr">Lr</span></span>
      <span class="tb-app"><span class="cc-tile ps">Ps</span></span>
      <span class="tb-app running active"><span class="cc-tile ai">Ai</span></span>
      <span class="tb-app"><span class="cc-tile ae">Ae</span></span>
      <span class="tb-app running">
        <svg class="i-app" viewBox="0 0 28 28"><circle cx="14" cy="14" r="14" fill="#dd4b3a"/><path d="M14 14L2 21a14 14 0 0 0 12 7z" fill="#2da44e"/><path d="M14 14l-1 14A14 14 0 0 0 28 14z" fill="#f9c713"/><circle cx="14" cy="14" r="6.500" fill="#4a8cf0" stroke="#fff" stroke-width="2"/></svg>
      </span>
      <span class="tb-app"><svg class="i-app" viewBox="0 0 28 28"><circle cx="14" cy="14" r="14" fill="#2f9fd8"/><path d="M5 14l17-7-3 15-5-3-2 3-1-5 8-6-10 5z" fill="#fff"/></svg></span>
      <span class="tb-app running flash"><svg class="i-app" viewBox="0 0 30 34"><path d="M2 3l13 14L2 31z" fill="#e8dff4"/><path d="M28 3L15 17l13 14z" fill="#fff"/><path d="M2 31l13-14 13 14-13-7z" fill="#7a56b8"/></svg></span>
      <span class="tb-app running"><svg class="i-app" viewBox="0 0 24 36"><defs><linearGradient id="bl" x2="1" y2="1"><stop offset="0" stop-color="#36b3e8"/><stop offset=".5" stop-color="#a050e0"/><stop offset="1" stop-color="#f04a70"/></linearGradient></defs><path d="M12 1c7 0 11 5 11 11 0 8-7 14-10 23C9 26 1 20 1 12 1 6 5 1 12 1z" fill="url(#bl)"/></svg></span>
      <span class="tb-app running"><svg class="i-app" viewBox="0 0 26 36"><path d="M1 2h24v20c0 7-6 11-12 13C7 33 1 29 1 22z" fill="#1e88d0"/><path d="M18 10a8 8 0 1 0 0 14" fill="none" stroke="#9fe0f8" stroke-width="2"/></svg></span>
      <span class="tb-app running"><span class="word-ic"><b>W</b><i></i></span></span>
      <span class="tb-app running"><svg class="i-app" viewBox="0 0 28 36"><circle cx="15" cy="11" r="11" fill="#eee" stroke="#c8303a" stroke-width="2"/><path d="M10 6l7 14 5-12z" fill="#aaa"/><circle cx="7" cy="23" r="5" fill="#8a6a6a"/><circle cx="22" cy="27" r="5" fill="none" stroke="#2f9fd8" stroke-width="2.500"/><path d="M17 20l3 5" stroke="#2f9fd8" stroke-width="2.500"/></svg></span>
      <span class="tb-app running"><svg class="i-app" viewBox="0 0 28 34"><path d="M0 0h28v34H0z" fill="#fff"/><path d="M2 3h24v24l-6-8-3 4-4-9-4 8-7 6z" fill="#111"/></svg></span>

      <div class="tray">
        <svg class="t-people" viewBox="0 0 18 22"><circle cx="12" cy="5" r="3.500" fill="none" stroke="#fff"/><path d="M7 13c1-3 9-3 10 1v4" fill="none" stroke="#fff"/><circle cx="6" cy="10" r="3" fill="#13212d" stroke="#fff"/><path d="M1 21c0-7 9-7 10 0" fill="none" stroke="#fff"/></svg>
        <svg class="t-caret" viewBox="0 0 17 10"><path d="M1 9l7.500-7.500L16 9" fill="none" stroke="#fff" stroke-width="1.200"/></svg>
        <svg class="t-shield" viewBox="0 0 19 26"><path d="M1 2l8-2 8 2v10c0 5-4 8-8 10-4-2-8-5-8-10z" fill="#fff"/><path d="M9 0v22M1 10h16" stroke="#13212d"/><circle cx="12" cy="19" r="6" fill="#2aa84a"/><path d="M9.500 19l2 2 3-4" stroke="#fff" fill="none"/></svg>
        <svg class="t-wifi" viewBox="0 0 22 20"><circle cx="3" cy="18" r="1.500" fill="#fff"/><path d="M1 12a6 6 0 0 1 7 6M1 7a11 11 0 0 1 12 11M1 2a16 16 0 0 1 17 16" fill="none" stroke="#a8b0b6" stroke-width="1.200"/></svg>
        <svg class="t-vol" viewBox="0 0 20 24"><path d="M1 8h4l5-5v18l-5-5H1z" fill="none" stroke="#fff"/><path d="M13 8c2 2 2 6 0 8M16 5c3 4 3 10 0 14" fill="none" stroke="#a8b0b6"/></svg>
        <div class="t-lang"><span lang="fa">فا</span><span>FA</span></div>
        <div class="t-clock"><span>05:31 <bdi lang="fa">ب.ظ</bdi></span><span>۲۰۱۸/۱۲/۰۱</span></div>
        <span class="t-notif">
          <svg viewBox="0 0 20 22"><path d="M0 0h20v16H8l-5 5v-5H0z" fill="#fff"/><path d="M3 4h14M3 8h14M3 12h14" stroke="#13212d"/></svg>
          <b>1</b>
        </span>
      </div>
    </footer>
  </div>
</body>
</html>
```

FILE: styles.css
```css
* { box-sizing: border-box; }

html, body {
  margin: 0;
  height: 100%;
  overflow: hidden;
}

body {
  font-family: "Liberation Sans", "DejaVu Sans", sans-serif;
  font-size: 10px;
  color: #cfcfcf;
  background: #535353;
}

svg { display: block; flex-shrink: 0; }
.defs { width: 0; height: 0; position: absolute; }

.app {
  width: 1920px;
  height: 1080px;
  display: flex;
  flex-direction: column;
}

/* spacing helpers */
.ml-1 { margin-left: 1px; }
.ml-4 { margin-left: 4px; }
.ml-5 { margin-left: 5px; }
.ml-6 { margin-left: 6px; }
.ml-7 { margin-left: 7px; }
.ml-8 { margin-left: 8px; }
.ml-9 { margin-left: 9px; }
.ml-10 { margin-left: 10px; }
.ml-11 { margin-left: 11px; }
.ml-12 { margin-left: 12px; }
.ml-13 { margin-left: 13px; }
.ml-14 { margin-left: 14px; }
.ml-15 { margin-left: 15px; }
.ml-16 { margin-left: 16px; }
.ml-18 { margin-left: 18px; }
.ml-20 { margin-left: 20px; }
.ml-36 { margin-left: 36px; }

.w-15 { width: 15px; }
.w-16 { width: 16px; }
.w-18 { width: 18px; }
.w-31 { width: 31px; }
.w-36 { width: 36px; }
.w-37 { width: 37px; }
.w-38 { width: 38px; }
.w-44 { width: 44px; }
.w-48 { width: 48px; }
.w-69 { width: 69px; }
.w-71 { width: 71px; }
.w-75 { width: 75px; }
.w-76 { width: 76px; }
.w-80 { width: 80px; }
.w-81 { width: 81px; }
.w-161 { width: 161px; }

.vsep {
  width: 1px;
  height: 22px;
  background: #484848;
  flex-shrink: 0;
}

/* menu bar */
.menubar {
  height: 31px;
  display: flex;
  align-items: center;
  background: #535353;
  border-bottom: 1px solid #3a3a3a;
  flex-shrink: 0;
}

.ai-logo {
  width: 34px;
  padding-left: 8px;
  flex-shrink: 0;
  font-size: 21px;
  font-weight: bold;
  color: #b57f5c;
}

.menus {
  width: 405px;
  display: flex;
  margin-left: 13px;
  font-size: 12px;
  color: #d6d6d6;
}
.menus span { flex-shrink: 0; }
.m-file { width: 35px; }
.m-edit { width: 37px; }
.m-object { width: 52px; }
.m-type { width: 43px; }
.m-select { width: 50px; }
.m-effect { width: 46px; }
.m-view { width: 43px; }
.m-window { width: 62px; }
.m-help { width: 24px; }

.app-tile {
  width: 16px;
  height: 16px;
  background: #c6c6c6;
  color: #555;
  font-size: 10px;
  font-weight: bold;
  text-align: center;
  line-height: 16px;
  flex-shrink: 0;
}

.arrange-ic { width: 17px; height: 14px; color: #d0d0d0; }
.rocket-ic { width: 18px; height: 18px; color: #b8b8b8; }

.chev-ic {
  width: 10px;
  height: 10px;
  color: #d0d0d0;
}

.top-right {
  margin-left: auto;
  display: flex;
  align-items: center;
  height: 30px;
}

.workspace {
  width: 50px;
  margin-left: 12px;
  font-size: 11px;
}
.ws-chev { margin-left: 9px; }

.stock-search {
  width: 169px;
  height: 19px;
  margin-left: 10px;
  display: flex;
  align-items: center;
  background: #474747;
  border-radius: 3px;
  color: #7f7f7f;
  font-size: 10px;
}
.stock-search span { margin-left: 7px; }

.search-ic {
  width: 16px;
  height: 16px;
  margin-left: 3px;
  color: #bdbdbd;
}

.win-btns {
  width: 103px;
  height: 18px;
  margin-left: 8px;
  margin-right: 3px;
  margin-bottom: 12px;
  display: flex;
  border: 1px solid #606060;
  border-top: 0;
  border-radius: 0 0 3px 3px;
  color: #bcbcbc;
}
.w-min { width: 28px; height: 17px; }
.w-res { width: 30px; height: 17px; border-left: 1px solid #606060; border-right: 1px solid #606060; }
.w-cls { width: 44px; height: 17px; }

/* control bar */
.controlbar {
  height: 33px;
  padding: 2px 0 0 5px;
  display: flex;
  align-items: center;
  background: #535353;
  border-bottom: 1px solid #3a3a3a;
  flex-shrink: 0;
}

.grip {
  width: 3px;
  height: 20px;
  flex-shrink: 0;
  background: repeating-linear-gradient(to bottom, #777 0 1px, transparent 1px 2px);
}

.ctl-title {
  width: 73px;
  margin-left: 7px;
  color: #bdbdbd;
  flex-shrink: 0;
}

.ctl-label {
  flex-shrink: 0;
  white-space: nowrap;
  color: #d8d8d8;
  text-decoration: underline dotted #bbb;
  text-underline-offset: 2px;
}

.combo {
  height: 20px;
  display: flex;
  align-items: center;
  flex-shrink: 0;
  background: #474747;
  border: 1px solid #5b5b5b;
  border-radius: 3px;
  color: #dedede;
}
.combo .val {
  flex: 1;
  min-width: 0;
  height: 100%;
  padding-left: 3px;
  line-height: 18px;
  white-space: nowrap;
  overflow: hidden;
  border-left: 1px solid #5b5b5b;
}
.combo .search-ic + .val {
  border-left: 0;
  padding-left: 6px;
}
.combo .val:first-child { border-left: 0; }
.combo .val.pl-7 { padding-left: 6px; }
.combo .chev-ic {
  width: 17px;
  height: 100%;
  padding: 4px;
  border-left: 1px solid #5b5b5b;
  flex-shrink: 0;
}
.combo .chev-right { transform: rotate(-90deg); border: 0; height: 17px; }
.spin-ic { width: 18px; height: 18px; padding: 0 2px; color: #dcdcdc; }

.sw { width: 19px; height: 19px; flex-shrink: 0; }
.sw-black { background: #000; border: 1px solid #fff; }

.gray-combo {
  width: 108px;
  height: 21px;
  display: flex;
  align-items: center;
  flex-shrink: 0;
  background: #585858;
  color: #6d6d6d;
}
.gray-fill { width: 90px; height: 100%; background: #7a7a7a; }
.gray-combo .chev-ic { margin-left: 4px; color: #6d6d6d; }

.globe-ic { width: 17px; height: 17px; color: #b0b0b0; }

.align-group {
  width: 73px;
  height: 23px;
  display: flex;
  flex-shrink: 0;
  border: 1px solid #5b5b5b;
  border-radius: 3px;
}
.align-group span {
  flex: 1;
  display: flex;
  align-items: center;
  justify-content: center;
  color: #cfcfcf;
}
.align-group svg { width: 18px; height: 16px; }
.align-group .on { background: #2e2e2e; border-radius: 3px 0 0 3px; }

.doc-ic { width: 24px; height: 20px; color: #c8c8c8; }
.obj-ic { width: 17px; height: 18px; color: #c8c8c8; }
.ref-ic { width: 19px; height: 19px; color: #cfcfcf; }
.link-ic { width: 14px; height: 13px; color: #c0c0c0; }
.grid4-ic { width: 13px; height: 13px; }
.list-ic { width: 14px; height: 12px; color: #cfcfcf; }
.chev-9 { width: 9px; height: 9px; }

.type-btn {
  width: 22px;
  height: 24px;
  display: flex;
  align-items: center;
  justify-content: center;
  flex-shrink: 0;
  background: #2e2e2e;
  border-radius: 3px;
  color: #cfcfcf;
}
.type-btn svg { width: 16px; height: 16px; }

/* main row */
.workspace-row {
  height: 966px;
  display: flex;
  flex-shrink: 0;
}

.strip {
  height: 13px;
  background: #3f3f3f;
  border-bottom: 1px solid #383838;
  position: relative;
}
.arrows {
  position: absolute;
  top: -2px;
  left: 6px;
  font-size: 11px;
  line-height: 13px;
  color: #a8a8a8;
}
.strip-right .arrows { left: 236px; }

/* left tools */
.toolbar {
  width: 74px;
  flex-shrink: 0;
  background: #535353;
  border-right: 2px solid #3d3d3d;
}

.tool-grip {
  height: 17px;
  display: flex;
  align-items: center;
  justify-content: center;
}
.grip-h {
  display: block;
  width: 16px;
  height: 5px;
  background: repeating-linear-gradient(to right, #808080 0 1px, transparent 1px 2px);
}

.tool-group {
  display: grid;
  grid-template-columns: 30px 30px;
  grid-auto-rows: 24px;
  justify-content: center;
  padding: 2px 0 1px 2px;
  border-bottom: 1px solid #4a4a4a;
}
.tg-select { padding-top: 0; }
.tg-paint { padding-top: 4px; padding-bottom: 0; }
.tg-chart { padding-bottom: 3px; }
.tg-nav { padding-top: 3px; padding-bottom: 2px; }

.tool {
  display: flex;
  align-items: center;
  justify-content: center;
  position: relative;
  color: #c9c9c9;
  border-radius: 3px;
}
.tool svg { width: 20px; height: 20px; }
.tool.more::after {
  content: "";
  position: absolute;
  right: 1px;
  bottom: 2px;
  border-style: solid;
  border-width: 0 0 3px 3px;
  border-color: transparent transparent #cfcfcf transparent;
}
.tool-on { background: #2e2e2e; }
.t-glyph {
  font-family: "Liberation Serif", serif;
  font-size: 23px;
  font-weight: bold;
  line-height: 20px;
  color: #d6d6d6;
}

.fill-stroke {
  position: relative;
  height: 61px;
  margin-top: 5px;
}
.tb-fill {
  position: absolute;
  left: 7px;
  top: 0;
  width: 35px;
  height: 35px;
  background: #000;
  border: 1px solid #fff;
  z-index: 1;
}
.tb-stroke { position: absolute; left: 24px; top: 18px; width: 36px; height: 34px; }
.tb-swap { position: absolute; left: 51px; top: 2px; width: 12px; height: 11px; }
.tb-default { position: absolute; left: 6px; top: 41px; width: 13px; height: 13px; }
.tb-default i, .tb-default b { position: absolute; display: block; width: 8px; height: 8px; border: 1px solid #ddd; }
.tb-default b { left: 4px; top: 4px; background: #111; }
.tb-default i { left: 0; top: 0; background: #fff; z-index: 1; border-color: #333; }

.mode-row {
  display: flex;
  width: 58px;
  height: 18px;
  margin: 0 0 0 7px;
  border: 1px solid #5c5c5c;
  border-radius: 3px;
}
.mode-row span {
  flex: 1;
  display: flex;
  align-items: center;
  justify-content: center;
}
.mode-row svg { width: 13px; height: 13px; }
.mode-row .on { background: #3a3a3a; }
.mode-row i { display: block; width: 13px; height: 13px; }
.m-black { background: #000; }
.m-grad { background: linear-gradient(to right, #fff, #000); border: 1px solid #000; }
.draw-row { margin-top: 6px; }

.screen-ic { width: 22px; height: 16px; margin: 8px 0 0 25px; }

/* center */
.center {
  width: 1558px;
  flex-shrink: 0;
  display: flex;
  flex-direction: column;
  min-width: 0;
}

.doc-tabs {
  height: 30px;
  background: #424242;
  border-bottom: 1px solid #323232;
  padding-top: 1px;
  flex-shrink: 0;
}

.doc-tab {
  width: 243px;
  height: 28px;
  padding-left: 10px;
  display: flex;
  align-items: center;
  background: #535353;
  font-size: 10.700px;
  font-weight: bold;
  color: #dcdcdc;
  white-space: nowrap;
}
.doc-tab span { width: 218px; }
.doc-tab b { font-size: 14px; }

.canvas-row {
  height: 919px;
  display: flex;
  flex-shrink: 0;
}

.canvas {
  width: 1541px;
  position: relative;
  background: #5f5f5f;
  padding: 26px 0 0 195px;
  flex-shrink: 0;
  overflow: hidden;
}

.artboard {
  width: 1157px;
  height: 869px;
  padding-top: 354px;
  background: #fff;
  border: 1px solid #000;
}

.art-text {
  margin: 0;
  width: 707px;
  font-family: "DejaVu Sans", sans-serif;
  font-size: 70.600px;
  line-height: 88px;
  color: #000;
  white-space: nowrap;
}

.vscroll {
  width: 17px;
  background: #4f4f4f;
  display: flex;
  flex-direction: column;
  align-items: center;
  position: relative;
}
.vscroll .chev-ic { color: #8f8f8f; }
.vscroll .flip { margin-top: 4px; }
.vscroll .chev-ic:last-child { margin-top: auto; margin-bottom: 3px; }
.flip { transform: rotate(180deg); }
.vthumb {
  position: absolute;
  left: 2px;
  top: 459px;
  width: 13px;
  height: 25px;
  background: #737373;
  border-radius: 6px;
}

/* floating panels */
.float {
  position: absolute;
  background: #535353;
  border-radius: 3px 3px 0 0;
  box-shadow: 0 1px 4px rgba(0, 0, 0, 0.45);
}

.float-title {
  height: 14px;
  background: #3d3d3d;
  display: flex;
  justify-content: flex-end;
  align-items: center;
  gap: 11px;
  padding-right: 6px;
  font-size: 10px;
  color: #b8b8b8;
  border-radius: 3px 3px 0 0;
}
.float-title span { font-size: 12px; line-height: 10px; }
.float-title b { font-size: 9px; }

.tabs {
  display: flex;
  align-items: stretch;
  background: #424242;
  color: #a2a2a2;
  position: relative;
  letter-spacing: 0.1px;
}
.tab {
  display: flex;
  align-items: center;
  justify-content: center;
  white-space: nowrap;
  flex-shrink: 0;
  border-right: 1px solid #3a3a3a;
}
.tab.active {
  background: #535353;
  color: #f0f0f0;
  font-weight: bold;
  letter-spacing: -0.1px;
}
.updn { width: 7px; height: 11px; margin-right: 3px; color: #c0c0c0; }

.t46 { width: 46px; }
.t50 { width: 50px; }
.t55 { width: 55px; }
.t56 { width: 56px; }
.t57 { width: 57px; }
.t61 { width: 61px; }
.t62 { width: 62px; }
.t64 { width: 64px; }
.t69 { width: 69px; }
.t73 { width: 73px; }
.t74 { width: 74px; }
.t77 { width: 77px; }
.t80 { width: 80px; }
.t84 { width: 84px; }
.t94 { width: 94px; }
.t95 { width: 95px; }

.burger-ic {
  position: absolute;
  right: 5px;
  top: 7px;
  width: 14px;
  height: 12px;
  color: #cfcfcf;
}

.para-panel {
  left: 627px;
  top: 23px;
  width: 232px;
  height: 197px;
}
.para-panel .tabs { height: 27px; }

.para-align {
  height: 38px;
  margin: 0 7px;
  padding-top: 7px;
  display: flex;
  border-bottom: 1px solid #4a4a4a;
}
.para-align span {
  width: 32px;
  height: 24px;
  display: flex;
  align-items: center;
  justify-content: center;
  color: #cfcfcf;
  flex-shrink: 0;
}
.para-align span:first-child { width: 24px; margin-right: 4px; }
.para-align svg { width: 18px; height: 16px; }
.para-align .on { background: #2e2e2e; border-radius: 3px; }

.para-fields {
  margin: 7px 7px 0;
  padding-bottom: 5px;
  display: grid;
  grid-template-columns: 116px 102px;
  grid-auto-rows: 20px;
  row-gap: 5px;
  border-bottom: 1px solid #4a4a4a;
}
.para-fields-2 { margin-top: 8px; }

.pf { display: flex; align-items: center; }
.pf-ic { width: 18px; height: 18px; margin-right: 3px; }
.pf-right .pf-ic { margin-right: 2px; }
.pf-box { width: 81px; }
.pf-right .pf-box { width: 82px; }
.pf-full { grid-column: 1; }

.hyph {
  margin: 8px 0 0 7px;
  display: flex;
  align-items: center;
  gap: 4px;
  color: #e0e0e0;
  font-weight: bold;
}
.hyph svg { width: 12px; height: 12px; }

.pstyles-panel {
  left: 1007px;
  top: 307px;
  width: 243px;
  height: 162px;
}
.pstyles-panel .tabs { height: 27px; }

.burger-btn {
  position: absolute;
  left: 221px;
  top: 7px;
  width: 17px;
  height: 14px;
  border: 1px solid #777;
  border-radius: 2px;
}
.burger-btn .burger-ic { right: 1px; top: 0; width: 13px; }

.pstyles-body { padding: 6px 6px 0 6px; }
.pstyles-list {
  height: 86px;
  border: 1px solid #5e5e5e;
  border-top: 0;
  border-radius: 2px;
}
.row-sel {
  height: 22px;
  padding-left: 5px;
  line-height: 23px;
  background: #4b6685;
  color: #c7d1dc;
}
.pstyles-foot {
  height: 20px;
  display: flex;
  align-items: center;
  color: #cfcfcf;
}
.cloud-ic { width: 18px; height: 12px; margin-left: 5px; }
.new-ic { width: 12px; height: 12px; margin-left: 147px; }
.trash-ic { width: 12px; height: 12px; margin-left: 13px; }
.dim { color: #6f6f6f; }
.mid { color: #b8b8b8; }

.float-foot {
  height: 9px;
  background: #3a3a3a;
  display: flex;
  justify-content: center;
  align-items: center;
}

/* flyout menu */
.flyout {
  position: absolute;
  left: 1246px;
  top: 327px;
  width: 293px;
  height: 336px;
  padding: 2px;
  background: #f0f0f0;
  border: 1px solid #a0a0a0;
  box-shadow: 3px 3px 3px rgba(0, 0, 0, 0.45);
  font-family: "Noto Sans", "Open Sans", sans-serif;
  font-size: 13.900px;
  color: #000;
}
.fly-item {
  height: 24px;
  padding-left: 34px;
  line-height: 25px;
  white-space: nowrap;
}
.fly-item.hover { background: #91c9f7; }
.fly-item.off { color: #6d6d6d; }
.flyout hr {
  height: 1px;
  margin: 3px 0 3px 30px;
  border: 0;
  background: #d4d4d4;
}

/* status bar */
.statusbar {
  flex: 1;
  display: flex;
  align-items: center;
  background: #505050;
  border-top: 1px solid #464646;
  padding: 1px 0 0 4px;
  color: #cfcfcf;
  position: relative;
}
.st-box {
  height: 16px;
  display: flex;
  align-items: center;
  background: #474747;
  flex-shrink: 0;
  padding: 0 4px 0 3px;
}
.st-box span { flex: 1; }
.st-zoom { width: 69px; }
.st-page { width: 59px; }
.st-nav { color: #757575; font-size: 10px; width: 18px; text-align: center; flex-shrink: 0; }
.nav-first { margin-left: 4px; }
.nav-next { margin-left: 3px; }
.st-type { margin-left: 93px; width: 118px; }
.st-play { font-size: 9px; color: #c8c8c8; width: 16px; }
.st-left, .st-right { color: #a8a8a8; font-size: 14px; }
.hthumb {
  position: absolute;
  left: 974px;
  top: 0;
  width: 25px;
  height: 15px;
  background: #6b6b6b;
  border-radius: 8px;
}
.st-right { position: absolute; left: 1530px; top: -2px; }

/* right panels */
.right {
  width: 288px;
  flex-shrink: 0;
  display: flex;
  background: #424242;
  padding-left: 1px;
}
.panels {
  width: 247px;
  flex-shrink: 0;
  display: flex;
  flex-direction: column;
  background: #3a3a3a;
}
.panel { background: #535353; display: flex; flex-direction: column; flex-shrink: 0; }
.panel .tabs { flex-shrink: 0; }

.p-color { height: 360px; }
.p-color .tabs { height: 26px; }
.color-body { padding: 7px 0 0 7px; }

.color-top {
  height: 20px;
  display: flex;
  align-items: center;
}
.c-none, .c-black, .c-white {
  width: 13px;
  height: 14px;
  display: block;
  border: 1px solid #222;
}
.c-none { border: 0; }
.c-black { background: #000; }
.c-white { background: #fff; }
.hash { margin-left: 117px; font-size: 10px; color: #b0b0b0; }
.hex {
  width: 59px;
  height: 20px;
  margin-left: 4px;
  padding-left: 5px;
  line-height: 20px;
  background: #474747;
  border-radius: 3px;
  color: #e8e8e8;
}

.spectrum {
  width: 222px;
  height: 294px;
  margin-top: 7px;
  border: 1px solid #2c2c2c;
  background:
    linear-gradient(to bottom, #fff 0%, rgba(255, 255, 255, 0) 50%, rgba(0, 0, 0, 0) 50%, #000 100%),
    linear-gradient(to right, #f00, #ff0, #0f0, #0ff, #00f, #f0f, #f00);
}

.p-symbols { height: 233px; margin-top: 3px; }
.p-symbols .tabs { height: 27px; }

.thumb-body { padding: 6px 7px 0 6px; position: relative; flex: 1; }

.thumbs {
  display: grid;
  grid-template-columns: repeat(6, 33px);
  grid-auto-rows: 33px;
  align-content: start;
  border: 1px solid #5e5e5e;
  border-radius: 2px;
}
.sym-thumbs { height: 180px; }
.gs-thumbs { height: 55px; overflow: hidden; }
.thumb {
  width: 32px;
  height: 32px;
  background: #e6e6e6;
}

.thumb-foot {
  height: 20px;
  display: flex;
  align-items: center;
  color: #cfcfcf;
}
.lib-ic { width: 16px; height: 14px; margin-left: 4px; }
.foot-icons {
  margin-left: auto;
  display: flex;
  align-items: center;
  gap: 12px;
  padding-right: 21px;
}
.foot-icons svg { width: 14px; height: 14px; }
.p-symbols .foot-icons { padding-right: 25px; }

.mini-up, .mini-down { position: absolute; right: 9px; color: #8f8f8f; }
.mini-up { top: 8px; }
.mini-down { top: 50px; }

.p-stroke { height: 59px; margin-top: 3px; }
.p-stroke .tabs { height: 27px; }
.weight-row {
  height: 32px;
  padding: 1px 0 0 7px;
  display: flex;
  align-items: center;
  color: #c8c8c8;
}
.weight-row span:first-child { width: 37px; flex-shrink: 0; }
.weight-row .combo { width: 87px; }

.p-gstyles { height: 108px; margin-top: 3px; }
.p-gstyles .tabs { height: 26px; }
.p-gstyles .thumb-body { padding-top: 8px; }

.p-layers { height: 180px; margin-top: 3px; }
.p-layers .tabs { height: 27px; }
.layers-body { padding: 6px 7px 0 6px; flex: 1; display: flex; flex-direction: column; }
.layers-list {
  height: 127px;
  border: 1px solid #5e5e5e;
  border-top: 0;
  flex-shrink: 0;
}
.layer-row {
  height: 22px;
  display: flex;
  align-items: center;
  background: #4b6685;
  position: relative;
  color: #dde3ea;
}
.eye { width: 14px; height: 10px; margin-left: 3px; }
.layer-color { display: block; width: 3px; height: 22px; margin-left: 25px; background: #4f6ff0; }
.layer-arrow { width: 6px; height: 10px; margin-left: 9px; }
.layer-thumb {
  width: 18px;
  height: 18px;
  margin-left: 13px;
  background: #fff;
  border: 1px solid #000;
  color: #000;
  font-family: "DejaVu Sans", sans-serif;
  font-size: 3.500px;
  line-height: 16px;
  text-align: center;
  overflow: hidden;
  white-space: nowrap;
  flex-shrink: 0;
}
.layer-name { margin-left: 5px; }
.layer-circle {
  position: absolute;
  left: 204px;
  top: 7px;
  width: 8px;
  height: 8px;
  border: 1px solid #dde3ea;
  border-radius: 50%;
}
.layer-square {
  position: absolute;
  left: 218px;
  top: 7px;
  width: 6px;
  height: 6px;
  background: #4f5ff0;
  border: 1px solid #111;
}
.layer-corner {
  position: absolute;
  right: 0;
  top: 0;
  border-style: solid;
  border-width: 0 6px 6px 0;
  border-color: transparent #e0e0e0 transparent transparent;
}
.layers-foot {
  flex: 1;
  display: flex;
  align-items: center;
  color: #bdbdbd;
}
.lit { color: #c4c4c4; }

.dock {
  width: 38px;
  margin-left: 2px;
  flex-shrink: 0;
  background: #535353;
  border-left: 1px solid #3a3a3a;
}
.dock .strip { background: #3f3f3f; }
.arrows-r { left: 21px; }
.dock-cell {
  height: 40px;
  padding-top: 5px;
  background: #535353;
  border-bottom: 1px solid #3a3a3a;
  display: flex;
  flex-direction: column;
  align-items: center;
  gap: 7px;
}
.cc-ic { width: 22px; height: 15px; }

/* taskbar */
.taskbar {
  flex: 1;
  display: flex;
  align-items: center;
  background: #13212d;
  color: #fff;
  border-top: 1px solid #11181f;
}

.start {
  width: 60px;
  flex-shrink: 0;
  display: flex;
  justify-content: center;
}
.start svg { width: 20px; height: 20px; }

.tb-search {
  width: 430px;
  height: 100%;
  flex-shrink: 0;
  display: flex;
  align-items: center;
  background: #f2f2f2;
  color: #333;
  font-family: "Noto Sans", "Open Sans", sans-serif;
  font-size: 16.700px;
}
.cortana {
  display: block;
  width: 27px;
  height: 27px;
  margin: 0 12px 0 11px;
  border: 4px solid #0b0b0b;
  border-radius: 50%;
  box-shadow: inset 0 0 0 1px #8a8a8a;
  flex-shrink: 0;
}
.mic { width: 17px; height: 24px; margin-left: auto; margin-right: 17px; }

.tb-app {
  width: 62px;
  height: 100%;
  flex-shrink: 0;
  display: flex;
  align-items: center;
  justify-content: center;
  position: relative;
}
.tb-app.running::after {
  content: "";
  position: absolute;
  left: 5px;
  right: 5px;
  bottom: 0;
  height: 3px;
  background: #76b9ed;
}
.tb-app.active { background: #5b6266; }
.tb-app.active::after { left: 0; right: 0; }
.tb-app.flash {
  padding: 0 5px;
  background: #6f6f32 content-box;
}
.tb-app.flash::after { background: #ffe600; }
.tb-app.split::before {
  content: "";
  position: absolute;
  right: 15px;
  bottom: 0;
  width: 1px;
  height: 3px;
  background: #13212d;
  z-index: 1;
}

.i-task { width: 19px; height: 23px; }
.i-app { width: 28px; height: 31px; }

.edge-e {
  font-family: "DejaVu Sans", sans-serif;
  font-size: 36px;
  font-weight: bold;
  line-height: 36px;
  color: #0f7ad8;
}

.cc-tile {
  width: 28px;
  height: 28px;
  display: block;
  font-family: "Roboto", sans-serif;
  font-size: 16px;
  line-height: 26px;
  text-align: center;
  border: 1px solid;
}
.lr { background: #14303f; color: #a5d5e8; border-color: #8fc4dc; }
.ps { background: #061a3a; color: #75c8f5; border-color: #6db4e4; }
.ai { background: #2d1400; color: #ff9a1f; border-color: #f08a14; }
.ae { background: #1f0d3c; color: #c79cf0; border-color: #b284e8; }

.word-ic {
  width: 27px;
  height: 28px;
  position: relative;
  background: #2b5797;
  color: #fff;
  display: block;
  font-family: "Liberation Sans", sans-serif;
  font-size: 14px;
  line-height: 28px;
  padding-left: 3px;
}
.word-ic i {
  position: absolute;
  right: 3px;
  top: 5px;
  width: 8px;
  height: 18px;
  background: repeating-linear-gradient(to bottom, #fff 0 2px, #2b5797 2px 4px);
}

.tray {
  margin-left: auto;
  width: 351px;
  height: 100%;
  flex-shrink: 0;
  display: flex;
  align-items: center;
  position: relative;
  font-family: "Noto Sans", "DejaVu Sans", sans-serif;
  font-size: 12px;
}
.t-people { width: 17px; height: 22px; }
.t-caret { width: 17px; height: 10px; margin-left: 29px; }
.t-shield { width: 19px; height: 26px; margin-left: 11px; }
.t-wifi { width: 21px; height: 19px; margin-left: 14px; }
.t-vol { width: 19px; height: 22px; margin-left: 7px; }

.t-lang, .t-clock {
  display: flex;
  flex-direction: column;
  align-items: center;
  gap: 6px;
  line-height: 17px;
  flex-shrink: 0;
}
.t-lang { width: 16px; margin-left: 17px; }
.t-clock { width: 74px; margin-left: 18px; white-space: nowrap; }

.t-notif { position: relative; width: 27px; height: 34px; margin-left: 20px; flex-shrink: 0; }
.t-notif svg { position: absolute; left: 0; top: 3px; width: 19px; height: 21px; }
.t-notif b {
  position: absolute;
  left: 7px;
  top: 14px;
  width: 20px;
  height: 20px;
  background: #2a3640;
  border: 2px solid #8a939a;
  border-radius: 50%;
  font-weight: normal;
  font-size: 12px;
  line-height: 16px;
  text-align: center;
}
```
